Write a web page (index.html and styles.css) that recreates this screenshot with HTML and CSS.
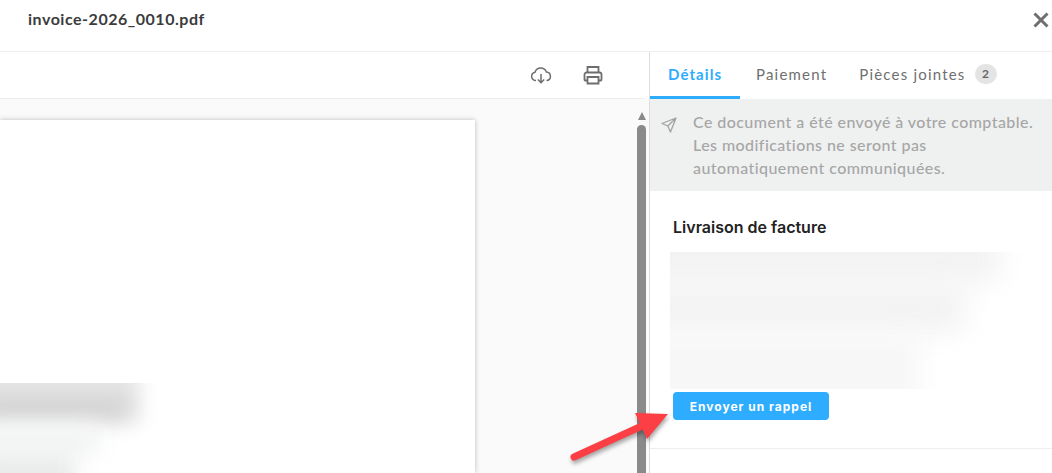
FILE: index.html
```html
<!DOCTYPE html>
<html>
	<head>
		<meta charset="utf-8" />
		<title>invoice-2026_0010.pdf</title>
		<link rel="stylesheet" href="styles.css">
	</head>

	<body>
		<header class="topbar">
			<span class="file-name">invoice-2026_0010.pdf</span>
			<svg class="close-icon" width="18" height="18" viewBox="0 0 18 18">
				<path d="M2.5 2.5 L15.5 15.5 M15.5 2.5 L2.5 15.5" />
			</svg>
		</header>

		<main class="content">
			<section class="viewer">
				<div class="toolbar">
					<svg class="tool-icon cloud" width="22" height="22" viewBox="0 0 22 22">
						<path d="M6 16.5 H5.5 A4.2 4.2 0 0 1 5 8.2 A6 6 0 0 1 16.4 8 A4.3 4.3 0 0 1 17 16.5 H16.5" />
						<path d="M11 10 V18.5 M7.8 15.5 L11 18.7 L14.2 15.5" />
					</svg>
					<svg class="tool-icon" width="22" height="22" viewBox="0 0 22 22">
						<path d="M5.5 8.5 V3 H16.5 V8.5" />
						<path d="M5.5 16.5 H3 A1 1 0 0 1 2.500 15.500 V10.500 A2 2 0 0 1 4.500 8.500 H17.500 A2 2 0 0 1 19.500 10.500 V15.500 A1 1 0 0 1 19 16.500 H16.500" />
						<path d="M5.500 13 H16.500 V19.500 H5.500 Z" />
					</svg>
				</div>

				<div class="canvas">
					<div class="page">
						<div class="smudges">
							<div class="smudge smudge-base"></div>
							<div class="smudge smudge-dark"></div>
							<div class="smudge smudge-pale"></div>
							<div class="smudge smudge-light"></div>
						</div>
					</div>
					<div class="scrollbar">
						<div class="scroll-arrow"></div>
						<div class="scroll-thumb"></div>
					</div>
				</div>
			</section>

			<aside class="side">
				<nav class="tabs">
					<a href="#" class="tab active">Détails</a>
					<a href="#" class="tab">Paiement</a>
					<a href="#" class="tab">Pièces jointes <span class="count">2</span></a>
				</nav>

				<div class="notice">
					<svg class="notice-icon" width="16" height="16" viewBox="0 0 16 16">
						<path d="M15 1 L1 6.500 L6.800 9 L9.500 15 Z M15 1 L6.800 9" />
					</svg>
					<p>Ce document a été envoyé à votre comptable.<br />Les modifications ne seront pas<br />automatiquement communiquées.</p>
				</div>

				<section class="delivery">
					<h2>Livraison de facture</h2>
					<div class="blurred">
						<div class="blur-band band-1"></div>
						<div class="blur-band band-2"></div>
						<div class="blur-band band-3"></div>
					</div>
					<button class="remind">Envoyer un rappel</button>
				</section>
			</aside>
		</main>

		<!-- annotation arrow drawn over the screenshot -->
		<svg class="annotation" width="120" height="70" viewBox="0 0 120 70">
			<path class="arrow-shaft" d="M8 59 L78 27" />
			<path class="arrow-head" d="M69 15 L102 16 L81 41 Z" />
		</svg>
	</body>
</html>
```

FILE: styles.css
```css
html, body {
	margin: 0;
	height: 100%;
}

body {
	position: relative;
	display: flex;
	flex-direction: column;
	height: 473px;
	overflow: hidden;
	background: #ffffff;
	font-family: "Lato", "Open Sans", sans-serif;
}

/**
 * Top bar with file name
 */
.topbar {
	display: flex;
	justify-content: space-between;
	align-items: flex-start;
	box-sizing: border-box;
	height: 52px;
	padding: 10px 2px 0 28px;
	border-bottom: 1px solid #eeeeee;
}

.file-name {
	font-size: 16px;
	font-weight: 700;
	line-height: 18px;
	letter-spacing: 0.52px;
	color: #3b3b3b;
}

.close-icon {
	margin-top: 1px;
	fill: none;
	stroke: #6f6f6f;
	stroke-width: 3;
}

.content {
	display: flex;
	flex: 1;
	min-height: 0;
}

/**
 * Left: document viewer
 */
.viewer {
	display: flex;
	flex-direction: column;
	width: 649px;
}

.toolbar {
	display: flex;
	justify-content: flex-end;
	align-items: center;
	gap: 30px;
	box-sizing: border-box;
	height: 47px;
	padding: 0 41px 0 0;
	margin-right: 4px;
	border-bottom: 1px solid #eeeeee;
}

.tool-icon {
	fill: none;
	stroke: #6e6e6e;
	stroke-width: 1.8;
}

.tool-icon.cloud {
	stroke-width: 1.5;
}

.canvas {
	display: flex;
	flex: 1;
	min-height: 0;
	background: #fafafa;
}

.page {
	position: relative;
	width: 475px;
	margin-top: 21px;
	background: #ffffff;
	box-shadow: 0 0 5px rgba(0, 0, 0, 0.25);
}

/* Blurred-out parts of the invoice */
.smudges {
	position: absolute;
	left: 0;
	top: 263px;
	width: 175px;
	height: 90px;
	overflow: hidden;
}

.smudge {
	position: absolute;
	filter: blur(10px);
}

.smudge-base {
	left: -20px;
	top: -20px;
	width: 160px;
	height: 60px;
	background: #e6e6e6;
}

.smudge-dark {
	left: -20px;
	top: 13px;
	width: 148px;
	height: 22px;
	background: #d2d2d2;
}

.smudge-pale {
	left: -20px;
	top: 42px;
	width: 120px;
	height: 30px;
	background: #f3f4f4;
}

.smudge-light {
	left: -20px;
	top: 72px;
	width: 95px;
	height: 40px;
	background: #e9ebeb;
}

.scrollbar {
	display: flex;
	flex-direction: column;
	align-items: center;
	width: 9px;
	margin-left: 162px;
	padding-top: 13px;
}

.scroll-arrow {
	width: 0;
	height: 0;
	border-left: 4.500px solid transparent;
	border-right: 4.500px solid transparent;
	border-bottom: 8px solid #8a8a8a;
}

.scroll-thumb {
	flex: 1;
	width: 9px;
	margin-top: 5px;
	border-radius: 4.500px 4.500px 0 0;
	background: #8a8a8a;
}

/**
 * Right: details panel
 */
.side {
	display: flex;
	flex-direction: column;
	flex: 1;
	border-left: 1px solid #dddddd;
}

.tabs {
	display: flex;
	height: 47px;
	background: #ffffff;
}

.tab {
	display: flex;
	align-items: center;
	box-sizing: border-box;
	height: 47px;
	padding: 0 16px 3px;
	font-size: 15px;
	letter-spacing: 1.2px;
	text-decoration: none;
	color: #6f6f6f;
}

.tab.active {
	width: 90px;
	padding: 0 0 0 18px;
	border-bottom: 3px solid #2eacff;
	font-weight: 700;
	letter-spacing: 1.1px;
	color: #2eacff;
}

.count {
	display: inline-block;
	width: 22px;
	height: 20px;
	margin-left: 9px;
	border-radius: 10px;
	background: #e4e4e4;
	font-size: 12px;
	font-weight: 700;
	line-height: 20px;
	letter-spacing: 0;
	text-align: center;
	color: #666666;
}

.notice {
	display: flex;
	box-sizing: border-box;
	height: 92px;
	padding: 11px 0 0 11px;
	background: #eff1f1;
}

.notice-icon {
	margin: 7px 16px 0 0;
	flex-shrink: 0;
	fill: none;
	stroke: #a2a2a2;
	stroke-width: 1.3;
	stroke-linejoin: round;
}

.notice p {
	margin: 0;
	font-size: 16px;
	font-weight: 500;
	line-height: 23px;
	letter-spacing: 0.43px;
	color: #a6a6a6;
}

.delivery {
	box-sizing: border-box;
	height: 258px;
	padding: 26px 0 0 23px;
	border-bottom: 1px solid #eeeeee;
}

.delivery h2 {
	margin: 0 0 15px;
	font-family: "Inter", sans-serif;
	font-size: 16px;
	font-weight: 600;
	line-height: 20px;
	color: #222222;
}

.blurred {
	position: relative;
	width: 352px;
	height: 137px;
	margin-left: -3px;
	overflow: hidden;
	background: #ffffff;
}

.blur-band {
	position: absolute;
	left: -30px;
	background: #f3f3f3;
	filter: blur(13px);
}

.band-1 {
	top: -25px;
	width: 360px;
	height: 55px;
}

.band-2 {
	top: 30px;
	width: 325px;
	height: 50px;
}

.band-3 {
	top: 80px;
	width: 280px;
	height: 80px;
	background: #f7f7f7;
}

.remind {
	display: block;
	width: 156px;
	height: 28px;
	margin-top: 3px;
	border: 0;
	border-radius: 4px;
	background: #2eacff;
	font-family: "Inter", sans-serif;
	font-size: 12px;
	font-weight: 700;
	letter-spacing: 1px;
	color: #ffffff;
}

/* The red arrow lies over the page */
.annotation {
	position: absolute;
	left: 566px;
	top: 398px;
	overflow: visible;
	filter: drop-shadow(1px 3px 2px rgba(0, 0, 0, 0.35));
}

.arrow-shaft {
	fill: none;
	stroke: #fb3f44;
	stroke-width: 7;
	stroke-linecap: round;
}

.arrow-head {
	fill: #fb3f44;
}
```
